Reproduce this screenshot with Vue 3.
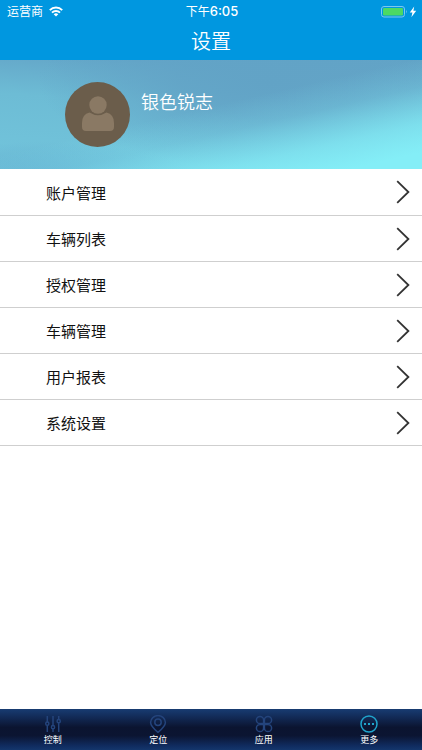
<script setup>
const items = ['账户管理', '车辆列表', '授权管理', '车辆管理', '用户报表', '系统设置']
const tabs = [
  { id: 'control', label: '控制' },
  { id: 'locate', label: '定位' },
  { id: 'apps', label: '应用' },
  { id: 'more', label: '更多' },
]
const active = 'more'
</script>

<template>
  <div class="screen">
    <header class="top">
      <div class="status">
        <div class="carrier">
          <span>运营商</span>
          <svg width="14" height="11" viewBox="0 0 14 11" fill="none" stroke="#fff" stroke-width="2">
            <path d="M0.8 4.1A9 9 0 0 1 13.2 4.1" />
            <path d="M3 6.6A5.8 5.8 0 0 1 11 6.6" />
            <path d="M7 10.6L4.7 8.3A3.3 3.3 0 0 1 9.3 8.3Z" fill="#fff" stroke="none" />
          </svg>
        </div>
        <time class="clock">下午<span class="digits">6:05</span></time>
        <div class="power">
          <svg width="36" height="12" viewBox="0 0 36 12">
            <rect x="0.5" y="0.5" width="23" height="10.5" rx="2.5" fill="none" stroke="#7cc8f0" />
            <rect x="2" y="2" width="20" height="7.5" rx="1.2" fill="#4cd964" />
            <path d="M25 3.8Q26.6 5.7 25 7.6Z" fill="#7cc8f0" />
            <path d="M33.2 0.4L28.8 6.4H31.4L30.4 11.2L35.2 4.8H32.4Z" fill="#fff" />
          </svg>
        </div>
      </div>
      <h1 class="title">设置</h1>
    </header>

    <section class="profile">
      <svg class="avatar" width="65" height="65" viewBox="0 0 65 65">
        <circle cx="32.5" cy="32.5" r="32.5" fill="#6b5d4b" />
        <circle cx="33" cy="23" r="8.7" fill="#8a7964" />
        <path d="M24.5 30.6Q33 36 41.5 30.6Q49 32.5 49 41V45Q49 49 45 49H21Q17 49 17 45V41Q17 32.5 24.5 30.6Z" fill="#8a7964" />
      </svg>
      <p class="name">银色锐志</p>
    </section>

    <ul class="menu">
      <li v-for="item in items" :key="item">
        <button type="button" class="row">
          <span>{{ item }}</span>
          <svg width="14" height="24" viewBox="0 0 14 24" fill="none" stroke="#333" stroke-width="1.8">
            <path d="M1.2 1.2L12.4 12L1.2 22.8" />
          </svg>
        </button>
      </li>
    </ul>

    <nav class="tabs">
      <button v-for="tab in tabs" :key="tab.id" type="button" class="tab" :class="{ active: tab.id === active }">
        <svg width="18" height="18" viewBox="0 0 18 18" fill="none" stroke="currentColor" stroke-width="1.5">
          <template v-if="tab.id === 'control'">
            <path d="M3.3 1V7M3.3 10.4V17M9 1V10.4M9 14V17M14.7 1V4.4M14.7 8V17" />
            <circle cx="3.3" cy="8.7" r="1.6" />
            <circle cx="9" cy="12.2" r="1.6" />
            <circle cx="14.7" cy="6.2" r="1.6" />
          </template>
          <template v-else-if="tab.id === 'locate'">
            <path d="M9 17.4Q1.6 11 1.6 7.4A7.4 6.8 0 0 1 16.4 7.4Q16.4 11 9 17.4Z" />
            <circle cx="9" cy="7.2" r="3.2" />
          </template>
          <template v-else-if="tab.id === 'apps'">
            <path d="M8.6 8.6H5A3.6 3.6 0 1 1 8.6 5ZM9.4 8.6V5A3.6 3.6 0 1 1 13 8.6ZM8.6 9.4V13A3.6 3.6 0 1 1 5 9.4ZM9.4 9.4H13A3.6 3.6 0 1 1 9.4 13Z" />
          </template>
          <template v-else>
            <circle cx="9" cy="9" r="8" />
            <path d="M4 9H6M8 9H10M12 9H14" stroke-width="2" />
          </template>
        </svg>
        <span>{{ tab.label }}</span>
      </button>
    </nav>
  </div>
</template>

<style>
body {
  margin: 0;
}
</style>

<style scoped>
.screen {
  display: flex;
  flex-direction: column;
  min-height: 100vh;
  background: #fff;
  font-family: "Liberation Sans", "Noto Sans CJK SC", sans-serif;
}

.top {
  height: 60px;
  background: #0097e0;
  color: #fff;
}

.status {
  display: grid;
  grid-template-columns: 1fr auto 1fr;
  align-items: center;
  height: 22px;
  padding: 0 5px 0 7px;
  font-family: Inter, "Noto Sans CJK SC", sans-serif;
  font-size: 12px;
  line-height: 22px;
}

.carrier {
  display: flex;
  align-items: center;
  gap: 6px;
}

.digits {
  font-size: 13px;
  font-weight: 500;
}

.power {
  display: flex;
  justify-content: flex-end;
}

.title {
  margin: 0;
  font-size: 20px;
  font-weight: 350;
  line-height: 40px;
  text-align: center;
}

.profile {
  display: flex;
  gap: 11px;
  height: 87px;
  padding: 22px 16px 0 65px;
  background:
    linear-gradient(167deg, #84eef700 46%, #84eef733 60%, #84eef7bb 78%, #84eef7 92%),
    radial-gradient(ellipse 35% 30% at 10% 105%, #65b0d0 0%, #65b0d000 100%),
    radial-gradient(ellipse 55% 80% at 64% 20%, #62a3c6 0%, #62a3c6cc 40%, #62a3c600 100%),
    linear-gradient(184deg, #62a3c6 0%, #64a6c8 15%, #6dbcd5 45%, #72c5dc 100%);
}

.name {
  margin: 7px 0 0;
  color: #fff;
  font-size: 18px;
  font-weight: 350;
  line-height: 28px;
}

.menu {
  flex: 1;
  margin: 0;
  padding: 0;
  list-style: none;
}

.row {
  box-sizing: border-box;
  display: flex;
  align-items: center;
  justify-content: space-between;
  width: 100%;
  height: 46px;
  padding: 0 12px 0 46px;
  border: 0;
  border-bottom: 1px solid #cfcfcf;
  background: none;
  color: #111;
  font: inherit;
  font-size: 15px;
  text-align: left;
}

.menu li:first-child .row {
  height: 47px;
}

.tabs {
  display: grid;
  grid-template-columns: repeat(4, 1fr);
  height: 41px;
  background: linear-gradient(#183c72 0%, #122a56 20%, #0b1430 45%, #0b1532 65%, #102c60 90%, #14366c 100%);
}

.tab {
  display: flex;
  flex-direction: column;
  align-items: center;
  padding: 6px 0 0;
  border: 0;
  background: none;
  color: #24447c;
  font: inherit;
  font-size: 9px;
  line-height: 14px;
}

.tab.active {
  color: #20a4cc;
}

.tab span {
  color: #fff;
}
</style>
